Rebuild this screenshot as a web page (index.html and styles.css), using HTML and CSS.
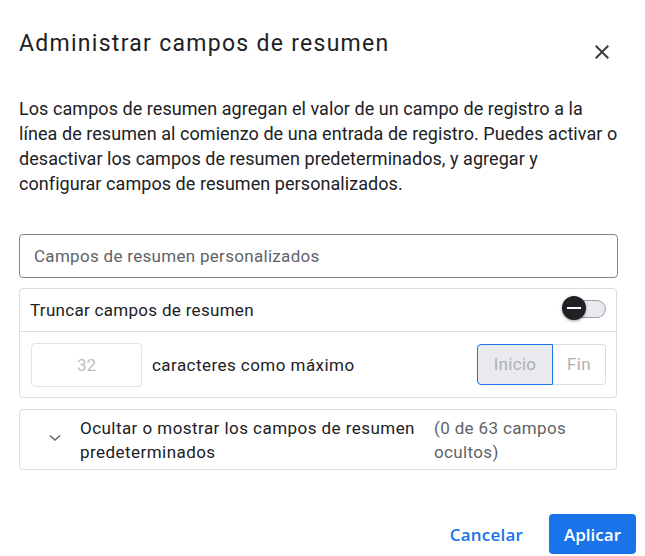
FILE: index.html
```html
<!DOCTYPE html>
<html lang="es">
<head>
<meta charset="utf-8">
<link rel="stylesheet" href="styles.css">
</head>
<body>
<div class="dialog">
  <div class="header">
    <h1 class="title">Administrar campos de resumen</h1>
    <button class="close" aria-label="Cerrar">
      <svg width="24" height="24" viewBox="0 0 24 24"><path d="M19 6.41L17.59 5 12 10.59 6.41 5 5 6.41 10.59 12 5 17.59 6.41 19 12 13.41 17.59 19 19 17.59 13.41 12z" fill="#3c4043"/></svg>
    </button>
  </div>
  <p class="desc">Los campos de resumen agregan el valor de un campo de registro a la línea de resumen al comienzo de una entrada de registro. Puedes activar o desactivar los campos de resumen predeterminados, y agregar y configurar campos de resumen personalizados.</p>
  <div class="field">Campos de resumen personalizados</div>
  <div class="card truncate">
    <div class="row head">
      <span class="label">Truncar campos de resumen</span>
      <span class="toggle"><span class="track"></span><span class="thumb"><span class="minus"></span></span></span>
    </div>
    <div class="row body">
      <div class="num">32</div>
      <span class="label">caracteres como máximo</span>
      <div class="seg">
        <span class="seg-btn on">Inicio</span>
        <span class="seg-btn">Fin</span>
      </div>
    </div>
  </div>
  <div class="card expander">
    <svg class="chev" width="12" height="8" viewBox="0 0 12 8"><polyline points="1,1.5 6,6 11,1.5" fill="none" stroke="#5f6368" stroke-width="1.4"/></svg>
    <span class="exp-label">Ocultar o mostrar los campos de resumen predeterminados</span>
    <span class="exp-count">(0 de 63 campos ocultos)</span>
  </div>
  <div class="footer">
    <button class="btn text">Cancelar</button>
    <button class="btn primary">Aplicar</button>
  </div>
</div>
</body>
</html>
```
FILE: styles.css
```css
html, body {
  margin: 0;
  padding: 0;
  background: #fff;
}
body {
  font-family: Roboto, "Liberation Sans", sans-serif;
  color: #202124;
  width: 645px;
  height: 556px;
  overflow: hidden;
}
.dialog {
  padding: 0 28px 0 19px;
}
.header {
  display: flex;
  align-items: center;
  justify-content: space-between;
  margin-top: 30px;
  height: 28px;
}
.title {
  margin: 0;
  font-size: 23px;
  font-weight: 400;
  line-height: 28px;
  letter-spacing: 1.28px;
  color: #202124;
}
.close {
  border: 0;
  background: none;
  padding: 0;
  width: 24px;
  height: 24px;
  margin-right: 3px;
  margin-top: 15px;
}
.desc {
  margin: 38px 0 0;
  font-size: 18px;
  line-height: 25px;
  letter-spacing: 0.06px;
  color: #202124;
  width: 600px;
}
.field {
  margin-top: 38px;
  height: 42px;
  border: 1px solid #80868b;
  border-radius: 4px;
  font-size: 17px;
  letter-spacing: 0.3px;
  line-height: 42px;
  padding-left: 14px;
  color: #5f6368;
  width: 583px;
}
.card {
  margin-top: 11px;
  border: 1px solid #dadce0;
  border-radius: 4px;
  width: 596px;
}
.card.truncate {
  margin-top: 10px;
}
.row {
  display: flex;
  align-items: center;
  padding: 0 10px;
}
.head {
  height: 42px;
  border-bottom: 1px solid #dadce0;
  justify-content: space-between;
}
.label {
  font-size: 17px;
  letter-spacing: 0.3px;
  color: #202124;
}
.body .label {
  letter-spacing: 0.45px;
}
.toggle {
  position: relative;
  width: 44px;
  height: 24px;
  margin-top: -2px;
}
.track {
  position: absolute;
  left: 4px;
  top: 3px;
  width: 38px;
  height: 16px;
  border: 1px solid #9aa0a6;
  border-radius: 9px;
  background: #e8eaed;
}
.thumb {
  position: absolute;
  left: 0;
  top: -1px;
  width: 24px;
  height: 24px;
  border-radius: 50%;
  background: #202124;
  box-shadow: 0 1px 3px rgba(0,0,0,0.4);
}
.minus {
  position: absolute;
  left: 5px;
  top: 11px;
  width: 14px;
  height: 2px;
  background: #fff;
}
.body {
  height: 65px;
  gap: 10px;
  padding-left: 11px;
}
.num {
  width: 109px;
  height: 42px;
  border: 1px solid #e3e3e3;
  border-radius: 4px;
  text-align: center;
  line-height: 42px;
  font-size: 17px;
  color: #bdbdbd;
}
.seg {
  margin-left: auto;
  display: flex;
}
.seg-btn {
  height: 39px;
  line-height: 39px;
  font-size: 17px;
  letter-spacing: 0.3px;
  color: #b0b0b0;
  border: 1px solid #dadce0;
  text-align: center;
}
.seg-btn.on {
  background: #e8eaed;
  border-color: #1a73e8;
  border-radius: 4px 0 0 4px;
  width: 74px;
}
.seg-btn:last-child {
  border-left: 0;
  border-radius: 0 4px 4px 0;
  width: 52px;
}
.expander {
  display: flex;
  align-items: center;
  height: 59px;
  margin-top: 11px;
}
.chev {
  margin-left: 29px;
  margin-right: 19px;
  margin-top: -4px;
  flex: none;
}
.exp-label {
  width: 345px;
  font-size: 17px;
  letter-spacing: 0.45px;
  line-height: 24px;
  color: #202124;
}
.exp-count {
  width: 170px;
  margin-left: 9px;
  font-size: 17px;
  letter-spacing: 0.35px;
  line-height: 24px;
  color: #5f6368;
}
.footer {
  display: flex;
  justify-content: flex-end;
  align-items: center;
  margin-top: 44px;
  margin-right: -19px;
  gap: 26px;
}
.btn {
  font-family: "Open Sans", Roboto, sans-serif;
  font-size: 17px;
  font-weight: 600;
  border: 0;
  border-radius: 4px;
  height: 40px;
  padding: 0 15px;
}
.btn.text {
  background: none;
  color: #1a73e8;
  padding: 0;
  letter-spacing: 0.2px;
}
.btn.primary {
  background: #1a73e8;
  color: #fff;
}
```
